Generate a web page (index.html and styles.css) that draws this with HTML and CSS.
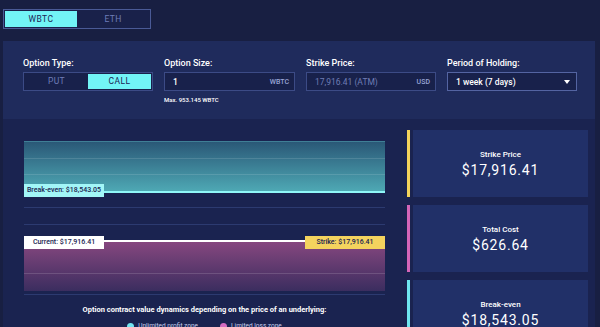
FILE: index.html
```html
<!doctype html>
<html lang="en">

<head>
	<meta charset="UTF-8" />
	<meta name="viewport" content="width=device-width, initial-scale=1.0" />
	<title>Options</title>
	<link rel="stylesheet" href="styles.css">
</head>

<body>
	<div class="page">
		<div class="asset-tabs">
			<button type="button" class="tab active">WBTC</button>
			<button type="button" class="tab">ETH</button>
		</div>

		<form class="option-form">
			<div class="field">
				<label>Option Type:</label>
				<div class="toggle">
					<span class="toggle-item">PUT</span>
					<span class="toggle-item active">CALL</span>
				</div>
			</div>

			<div class="field">
				<label for="optionSize">Option Size:</label>
				<div class="input-box">
					<span class="input-value">1</span>
					<span class="input-unit">WBTC</span>
				</div>
				<div class="hint">Max. 953.145 WBTC</div>
			</div>

			<div class="field">
				<label>Strike Price:</label>
				<div class="input-box">
					<span class="input-value muted">17,916.41 (ATM)</span>
					<span class="input-unit">USD</span>
				</div>
			</div>

			<div class="field">
				<label>Period of Holding:</label>
				<div class="input-box select-box">
					<span class="input-value">1 week (7 days)</span>
					<span class="caret"></span>
				</div>
			</div>
		</form>

		<section class="overview">
			<div class="chart-col">
				<div class="chart">
					<div class="zone zone-profit">
						<span class="tag tag-breakeven">Break-even: $18,543.05</span>
					</div>
					<div class="zone-gap"></div>
					<div class="zone zone-loss">
						<span class="tag tag-current">Current: $17,916.41</span>
						<span class="tag tag-strike">Strike: $17,916.41</span>
					</div>
				</div>
				<p class="caption">Option contract value dynamics depending on the price of an underlying:</p>
				<div class="legend">
					<span class="legend-item"><i class="dot dot-profit"></i>Unlimited profit zone</span>
					<span class="legend-item"><i class="dot dot-loss"></i>Limited loss zone</span>
				</div>
			</div>

			<div class="cards">
				<div class="card-row">
					<span class="card-bar bar-yellow"></span>
					<div class="card">
						<div class="card-title">Strike Price</div>
						<div class="card-value">$17,916.41</div>
					</div>
				</div>
				<div class="card-row">
					<span class="card-bar bar-pink"></span>
					<div class="card">
						<div class="card-title">Total Cost</div>
						<div class="card-value">$626.64</div>
					</div>
				</div>
				<div class="card-row">
					<span class="card-bar bar-cyan"></span>
					<div class="card">
						<div class="card-title">Break-even</div>
						<div class="card-value">$18,543.05</div>
					</div>
				</div>
			</div>
		</section>
	</div>
</body>

</html>
```

FILE: styles.css
```css
body {
	margin: 0;
	background-color: #181f42;
	font-family: Roboto, "Liberation Sans", sans-serif;
	color: #ffffff;
	overflow: hidden;
}

.page {
	width: 592px;
	margin-left: 3px;
	padding-top: 9px;
}

.asset-tabs {
	display: flex;
	width: 144px;
	height: 16px;
	padding: 1px;
	border: 1px solid #4a5a96;
	background-color: #19214a;
}

.tab {
	flex: 1;
	border: none;
	background: none;
	padding: 0;
	font-family: inherit;
	font-size: 8.5px;
	font-weight: 400;
	letter-spacing: 0.4px;
	color: #6f7db8;
}

.tab.active {
	background-color: #72f4f6;
	color: #1c2454;
}

.option-form {
	display: grid;
	grid-template-columns: 130px 131px 130px 130px;
	column-gap: 11px;
	margin-top: 12px;
	padding: 16px 20px 15px;
	background-color: #1f2b5c;
}

.field label {
	display: block;
	height: 12px;
	margin-bottom: 3px;
	font-size: 9px;
	font-weight: 500;
	line-height: 12px;
}

.toggle {
	display: flex;
	height: 15px;
	padding: 1px;
	border: 1px solid #3c4b86;
	background-color: #18214b;
}

.toggle-item {
	flex: 1;
	font-size: 8.5px;
	font-weight: 400;
	line-height: 15px;
	text-align: center;
	letter-spacing: 0.4px;
	color: #6f7db8;
}

.toggle-item.active {
	background-color: #72f4f6;
	color: #1c2454;
}

.input-box {
	display: flex;
	align-items: center;
	justify-content: space-between;
	height: 17px;
	padding: 0 5px 0 8px;
	border: 1px solid #3c4b86;
	background-color: #18214b;
}

.input-value {
	font-size: 8.5px;
	font-weight: 500;
}

.input-value.muted {
	font-weight: 400;
	color: #6f7db4;
}

.input-unit {
	font-size: 7px;
	font-weight: 500;
	color: #9aa6d6;
}

.select-box {
	border-color: #5464a2;
	padding-right: 6px;
}

.caret {
	width: 0;
	height: 0;
	border-left: 3px solid transparent;
	border-right: 3px solid transparent;
	border-top: 4px solid #ffffff;
}

.hint {
	margin-top: 5px;
	font-size: 6px;
	font-weight: 500;
	line-height: 8px;
}

.overview {
	display: flex;
	gap: 22px;
	height: 210px;
	padding: 11px 7px 0 21px;
	background-color: #1a2350;
}

.chart-col {
	width: 361px;
	padding-top: 11px;
}

.chart {
	padding-bottom: 3px;
	border-bottom: 1px solid #2c3a70;
}

.zone {
	position: relative;
}

.zone-profit {
	height: 49px;
	border-top: 1px solid #3f7f96;
	border-bottom: 2px solid #8ff7f8;
	background-image:
		linear-gradient(rgba(255, 255, 255, 0.12), rgba(255, 255, 255, 0.12)),
		linear-gradient(rgba(255, 255, 255, 0.12), rgba(255, 255, 255, 0.12)),
		linear-gradient(#2a5877, #4ea8b4);
	background-size: 100% 1px, 100% 1px, 100% 100%;
	background-position: 0 16px, 0 32px, 0 0;
	background-repeat: no-repeat;
}

.zone-gap {
	height: 47px;
	background-image:
		linear-gradient(#2c3a70, #2c3a70),
		linear-gradient(#2c3a70, #2c3a70);
	background-size: 100% 1px;
	background-position: 0 14px, 0 31px;
	background-repeat: no-repeat;
}

.zone-loss {
	height: 49px;
	border-top: 2px solid #ffffff;
	background-image:
		linear-gradient(rgba(255, 255, 255, 0.14), rgba(255, 255, 255, 0.14)),
		linear-gradient(#86477f, #3b2d5f);
	background-size: 100% 1px, 100% 100%;
	background-position: 0 31px, 0 0;
	background-repeat: no-repeat;
}

.tag {
	position: absolute;
	width: 80px;
	height: 13px;
	font-size: 7px;
	font-weight: 500;
	line-height: 13px;
	text-align: center;
	color: #1a2350;
}

.tag-breakeven {
	left: 0;
	bottom: -6px;
	background-color: #a2f6f7;
}

.tag-current {
	left: 0;
	top: -6px;
	background-color: #ffffff;
}

.tag-strike {
	right: 0;
	top: -6px;
	background-color: #f4d35e;
}

.caption {
	margin: 10px 0 0;
	font-size: 7.5px;
	font-weight: 700;
	line-height: 10px;
	text-align: center;
}

.legend {
	display: flex;
	justify-content: center;
	gap: 22px;
	margin-top: 7px;
	font-size: 6.5px;
	line-height: 8px;
	color: #c8cfec;
}

.legend-item {
	display: flex;
	align-items: center;
	gap: 4px;
}

.dot {
	width: 7px;
	height: 7px;
	border-radius: 50%;
}

.dot-profit {
	background-color: #72e4f0;
}

.dot-loss {
	background-color: #d46bc0;
}

.cards {
	display: flex;
	flex-direction: column;
	gap: 8px;
	width: 181px;
}

.card-row {
	display: flex;
	gap: 3px;
	height: 67px;
	flex-shrink: 0;
}

.card-bar {
	width: 3px;
}

.bar-yellow {
	background-color: #f3d35b;
}

.bar-pink {
	background-color: #d465b8;
}

.bar-cyan {
	background-color: #6fe6f0;
}

.card {
	flex: 1;
	display: flex;
	flex-direction: column;
	align-items: center;
	justify-content: center;
	background-color: #213068;
}

.card-title {
	font-size: 8px;
	font-weight: 500;
	line-height: 10px;
}

.card-value {
	margin-top: 3px;
	font-size: 14px;
	font-weight: 400;
	letter-spacing: 0.8px;
	line-height: 15px;
}
```
